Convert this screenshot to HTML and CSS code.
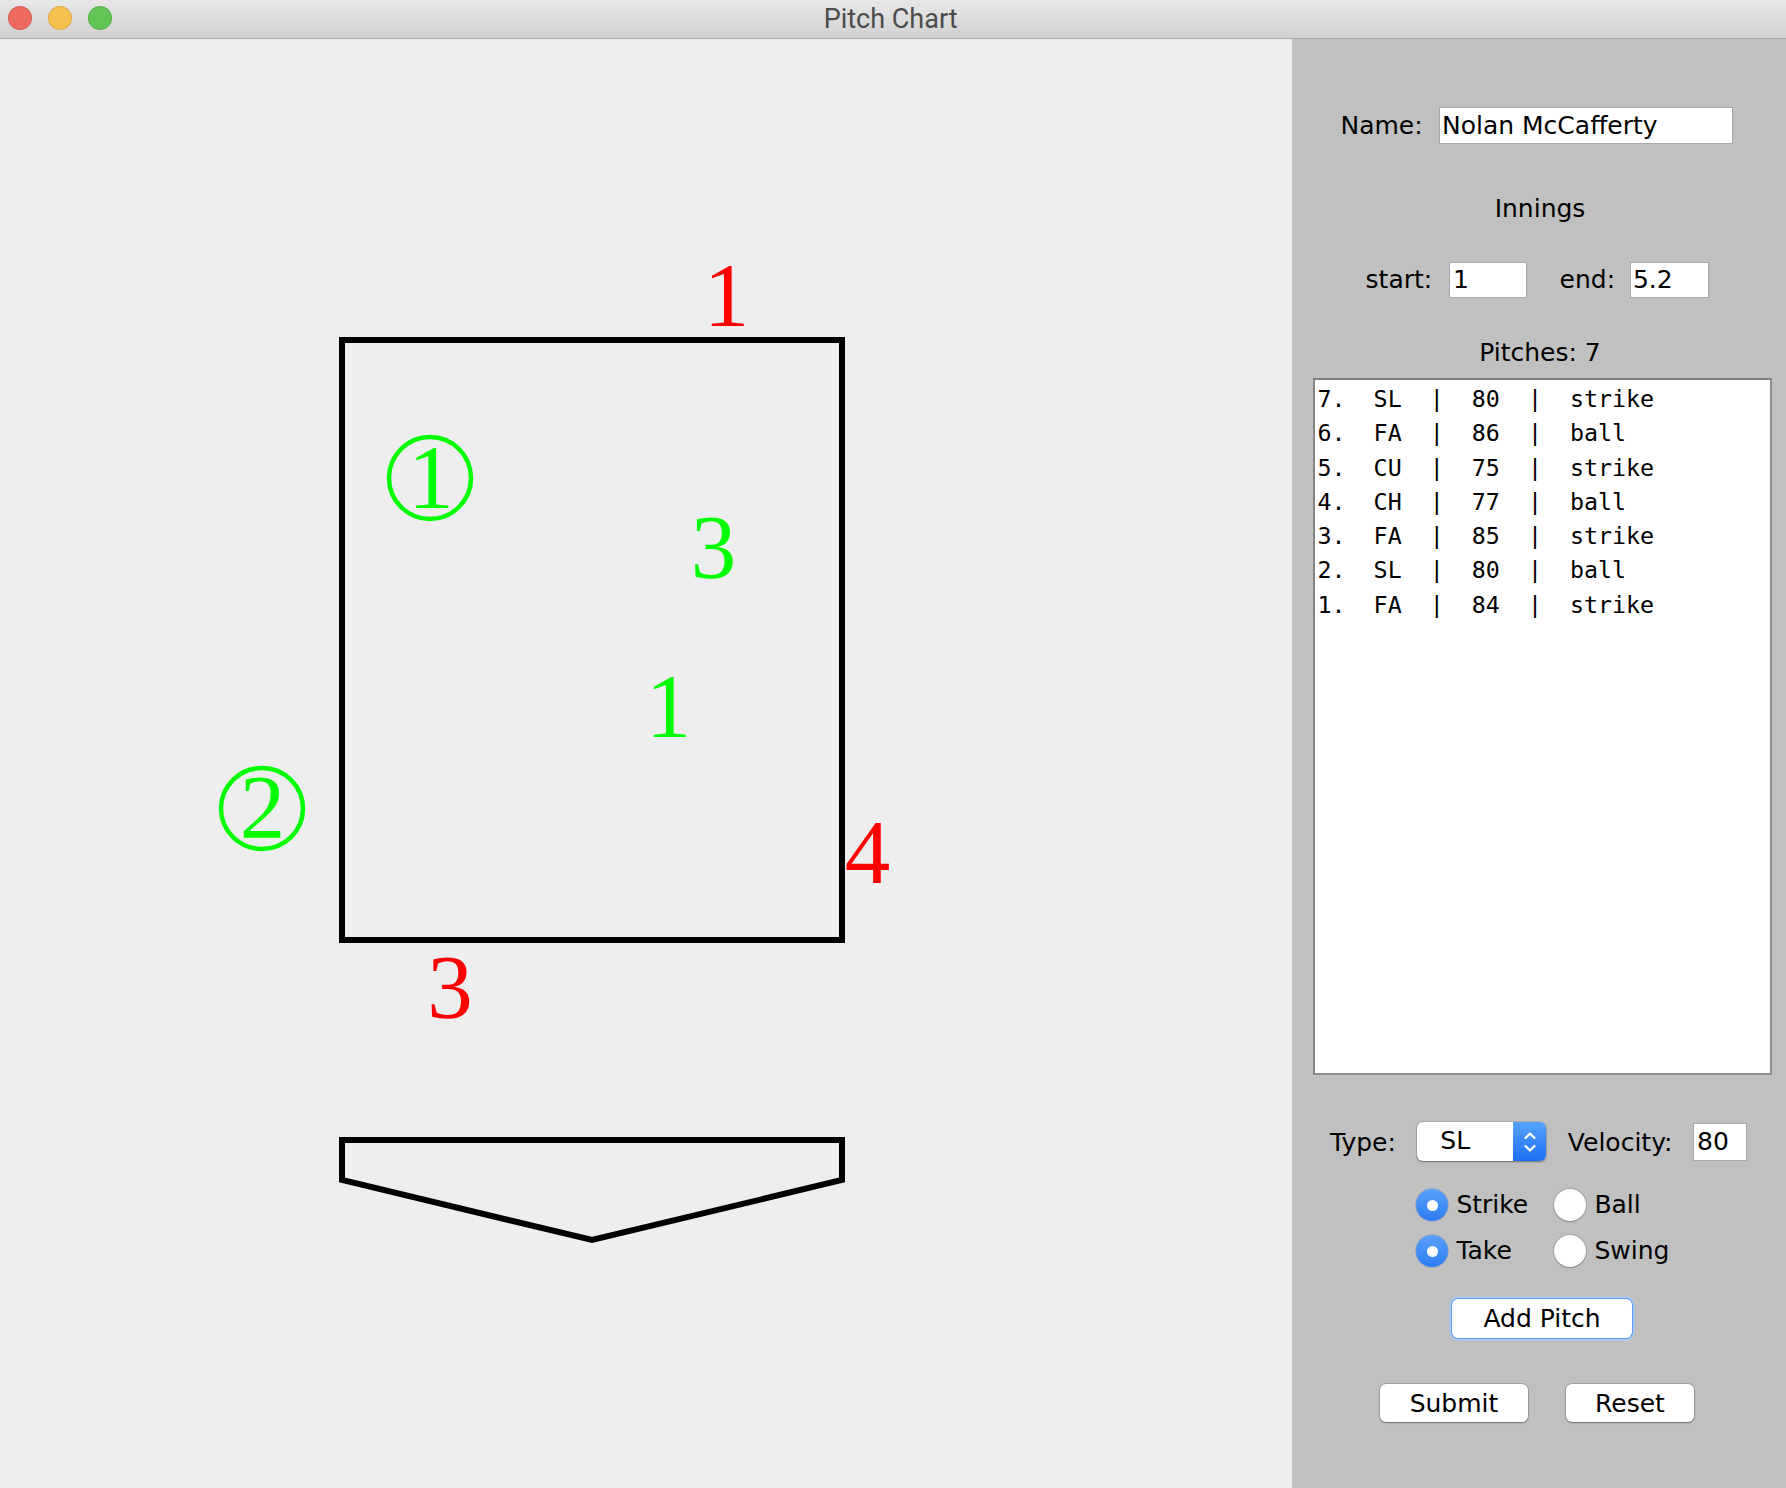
FILE: index.html
```html
<!DOCTYPE html>
<html>
<head>
<meta charset="utf-8">
<title>Pitch Chart</title>
<link rel="stylesheet" href="styles.css">
</head>
<body>
<div class="window">
  <div class="titlebar">
    <div class="lights">
      <span class="light red"></span>
      <span class="light yellow"></span>
      <span class="light green"></span>
    </div>
    <div class="title">Pitch Chart</div>
  </div>
  <div class="main">
    <div class="canvas">
      <svg class="chart" width="1292" height="1449" viewBox="0 0 1292 1449">
        <rect x="342" y="301" width="500" height="600" class="zone"/>
        <polygon points="342,1101 842,1101 842,1141 592,1201 342,1141" class="zone"/>
        <text class="mk mk-red" x="726.5" y="287">1</text>
        <text class="mk mk-green" x="713.5" y="539">3</text>
        <text class="mk mk-green" x="668.5" y="698">1</text>
        <text class="mk mk-red" x="867.5" y="844">4</text>
        <text class="mk mk-red" x="450" y="979">3</text>
        <ellipse class="ring" cx="430" cy="439" rx="41" ry="41"/>
        <text class="mk mk-green" x="431" y="469">1</text>
        <ellipse class="ring" cx="262" cy="769.5" rx="41" ry="40.5"/>
        <text class="mk mk-green" x="262.5" y="799">2</text>
      </svg>
    </div>
    <div class="panel">
      <div class="name-row">
        <span class="lbl">Name:</span>
        <div class="field name-field">Nolan McCafferty</div>
      </div>
      <div class="heading innings">Innings</div>
      <div class="innings-row">
        <span class="lbl">start:</span>
        <div class="field inn-field">1</div>
        <span class="lbl end-lbl">end:</span>
        <div class="field inn-field end-field">5.2</div>
      </div>
      <div class="heading pitches">Pitches: 7</div>
      <div class="list">
        <div class="row">7.  SL  |  80  |  strike</div>
        <div class="row">6.  FA  |  86  |  ball</div>
        <div class="row">5.  CU  |  75  |  strike</div>
        <div class="row">4.  CH  |  77  |  ball</div>
        <div class="row">3.  FA  |  85  |  strike</div>
        <div class="row">2.  SL  |  80  |  ball</div>
        <div class="row">1.  FA  |  84  |  strike</div>
      </div>
      <div class="type-row">
        <span class="lbl">Type:</span>
        <div class="combo">
          <span class="combo-val">SL</span>
          <span class="combo-btn">
            <svg width="14" height="26" viewBox="0 0 14 26">
              <path d="M2.5 9 L7 4.5 L11.5 9" class="chev"/>
              <path d="M2.5 17 L7 21.5 L11.5 17" class="chev"/>
            </svg>
          </span>
        </div>
        <span class="lbl vel-lbl">Velocity:</span>
        <div class="field vel-field">80</div>
      </div>
      <div class="radios">
        <div class="radio"><span class="knob on"></span><span class="rlbl">Strike</span></div>
        <div class="radio"><span class="knob off"></span><span class="rlbl">Ball</span></div>
        <div class="radio"><span class="knob on"></span><span class="rlbl">Take</span></div>
        <div class="radio"><span class="knob off"></span><span class="rlbl">Swing</span></div>
      </div>
      <div class="add-row">
        <button class="btn add">Add Pitch</button>
      </div>
      <div class="bottom-row">
        <button class="btn submit">Submit</button>
        <button class="btn reset">Reset</button>
      </div>
    </div>
  </div>
</div>
</body>
</html>
```

FILE: styles.css
```css
* { box-sizing: border-box; }
html, body { margin: 0; padding: 0; }
body {
  width: 1786px;
  height: 1488px;
  overflow: hidden;
  background: #eeeeee;
  font-family: "DejaVu Sans", sans-serif;
  color: #000;
}
.window {
  width: 1786px;
  height: 1488px;
  display: flex;
  flex-direction: column;
}
.titlebar {
  height: 39px;
  flex: none;
  display: flex;
  align-items: center;
  background: linear-gradient(#e8e8e8, #d1d1d1);
  border-bottom: 1px solid #a9a9a9;
}
.lights {
  display: flex;
  gap: 16.6px;
  margin-left: 8.3px;
  margin-top: -2px;
}
.light {
  width: 23.4px;
  height: 23.4px;
  border-radius: 50%;
}
.light.red { background: #ee6a5f; border: 1px solid #d4574b; }
.light.yellow { background: #f6c04f; border: 1px solid #d9a53f; }
.light.green { background: #62c655; border: 1px solid #4fab40; }
.title {
  margin-left: 712px;
  font-family: Roboto, "Liberation Sans", sans-serif;
  font-size: 27px;
  color: #4c4c4c;
}
.main {
  flex: 1;
  display: flex;
}
.canvas {
  width: 1292px;
  flex: none;
  background: #eeeeee;
}
.chart { display: block; }
.zone {
  fill: none;
  stroke: #000;
  stroke-width: 6;
  stroke-linejoin: miter;
}
.ring {
  fill: none;
  stroke: #00ff00;
  stroke-width: 4.5;
}
.mk {
  font-family: "Liberation Serif", "Times New Roman", serif;
  font-size: 91px;
  text-anchor: middle;
}
.mk-red { fill: #ff0000; }
.mk-green { fill: #00ff00; }

.panel {
  width: 494px;
  flex: none;
  background: #c0c0c0;
  display: flex;
  flex-direction: column;
  font-size: 25px;
}
.lbl {
  line-height: 36px;
  white-space: nowrap;
}
.field {
  background: #fff;
  border: 1px solid #a8a8a8;
  font-size: 25px;
  padding: 0 3px;
  white-space: nowrap;
}
.name-row {
  margin-top: 68px;
  height: 37px;
  display: flex;
  align-items: center;
  padding-left: 48.5px;
  gap: 16.3px;
}
.name-field {
  width: 294px;
  height: 37px;
  line-height: 35px;
  padding-left: 2px;
}
.heading {
  height: 36px;
  line-height: 36px;
  text-align: center;
  padding-left: 2px;
}
.innings { margin-top: 47px; }
.innings-row {
  margin-top: 35px;
  height: 36px;
  display: flex;
  align-items: center;
  padding-left: 73.6px;
}
.inn-field {
  width: 78px;
  height: 36px;
  line-height: 34px;
  margin-left: 16.7px;
}
.end-lbl { margin-left: 32.6px; }
.end-field { width: 79px; margin-left: 14.9px; padding-left: 2px; }
.pitches { margin-top: 37px; }
.list {
  margin-top: 7px;
  margin-left: 21px;
  width: 459px;
  height: 697px;
  background: #fff;
  border: 2px solid #8f8f8f;
  border-top-color: #7f7f7f;
  border-left-color: #858585;
  padding: 2px 0 0 2.5px;
  font-family: "DejaVu Sans Mono", monospace;
  font-size: 23.3px;
  line-height: 34.3px;
}
.row { white-space: pre; }

.type-row {
  margin-top: 47px;
  height: 39px;
  display: flex;
  align-items: center;
  padding-left: 38px;
}
.type-row .lbl { margin-top: 3px; }
.combo {
  margin-left: 21.5px;
  width: 129px;
  height: 39px;
  display: flex;
  background: #fff;
  border-radius: 6px;
  overflow: hidden;
  box-shadow: 0 0 0 1px rgba(0, 0, 0, 0.1), 0 1px 2px rgba(0, 0, 0, 0.35);
}
.combo-val {
  flex: 1;
  padding-left: 23px;
  line-height: 37px;
}
.combo-btn {
  width: 33px;
  flex: none;
  display: flex;
  align-items: center;
  justify-content: center;
  background: linear-gradient(#55a2fb, #1f6ff4);
}
.chev {
  fill: none;
  stroke: #fff;
  stroke-width: 2.2;
  stroke-linecap: round;
  stroke-linejoin: round;
}
.vel-lbl { margin-left: 21.5px; }
.vel-field {
  margin-left: 20.5px;
  width: 54px;
  height: 38px;
  line-height: 36px;
  padding-left: 3px;
}

.radios {
  margin-top: 21px;
  margin-left: 124px;
  display: grid;
  grid-template-columns: 138px auto;
}
.radio {
  height: 46px;
  display: flex;
  align-items: center;
  gap: 8.4px;
}
.rlbl { line-height: 36px; }
.knob {
  width: 32px;
  height: 32px;
  border-radius: 50%;
  flex: none;
  display: flex;
  align-items: center;
  justify-content: center;
}
.knob.on {
  background: linear-gradient(#5aa1fb, #2d7df3);
  box-shadow: 0 0 0 0.5px rgba(30, 90, 200, 0.5);
}
.knob.on::after {
  content: "";
  width: 11px;
  height: 11px;
  border-radius: 50%;
  background: #fff;
}
.knob.off {
  background: #fff;
  box-shadow: 0 0 0 1px rgba(0, 0, 0, 0.12), 0 1px 1.5px rgba(0, 0, 0, 0.22);
}

.btn {
  font-family: "DejaVu Sans", sans-serif;
  font-size: 25px;
  color: #000;
  background: #fff;
  border: none;
  border-radius: 6px;
  padding: 0;
  box-shadow: 0 0 0 1px rgba(0, 0, 0, 0.16), 0 1px 1.5px rgba(0, 0, 0, 0.3);
}
.add-row {
  margin-top: 25px;
  padding-left: 160px;
  display: flex;
}
.btn.add {
  width: 180px;
  height: 39px;
  box-shadow: 0 0 0 1px #5e9be8, 0 0 0 2.5px #a8c9f3;
}
.bottom-row {
  margin-top: 46px;
  padding-left: 88px;
  display: flex;
  gap: 38px;
}
.btn.submit { width: 148px; height: 38px; }
.btn.reset { width: 128px; height: 38px; }
```
